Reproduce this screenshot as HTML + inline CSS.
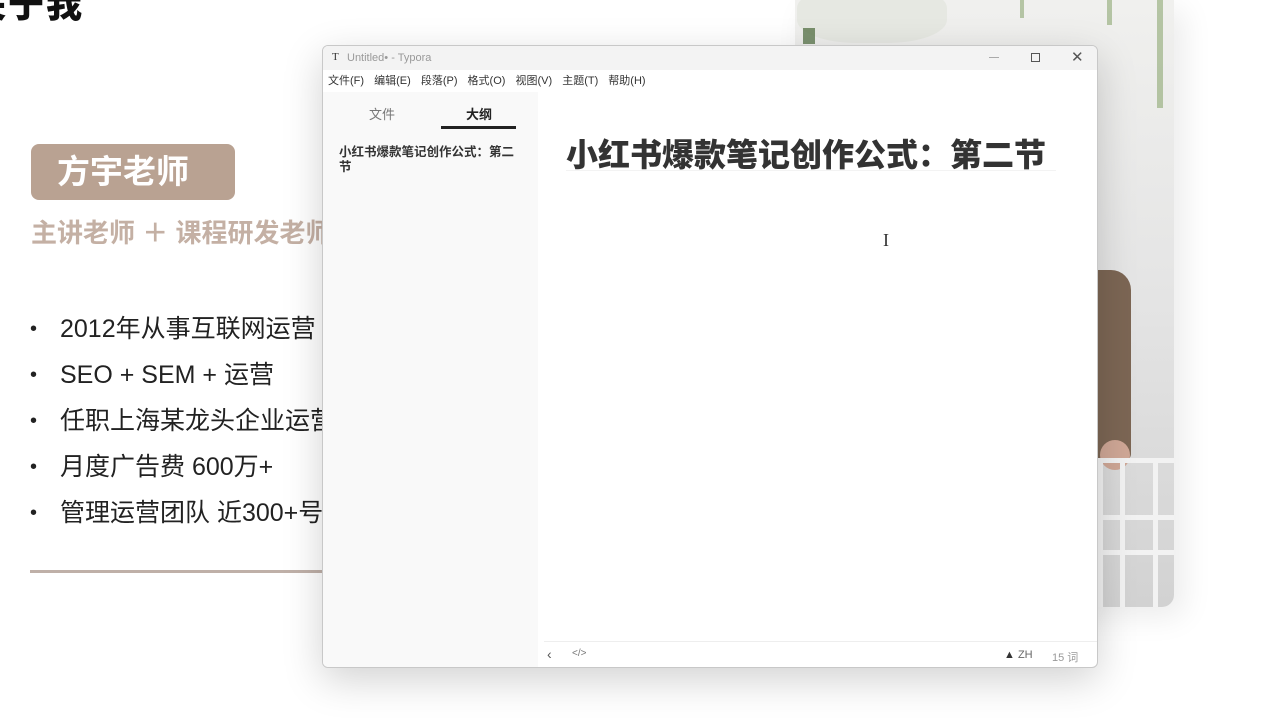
<!DOCTYPE html>
<html><head><meta charset="utf-8"><style>
*{margin:0;padding:0;box-sizing:border-box}
body{width:1280px;height:718px;overflow:hidden;background:#fff;position:relative;font-family:"Liberation Sans","Noto Sans CJK SC",sans-serif}
.abs{position:absolute}
.b div{position:relative;padding-left:30px}
.b div:before{content:"•";position:absolute;left:0;font-size:20px}
</style></head><body>
<div class="abs" style="left:-30px;top:-24px;font-size:36px;font-weight:900;color:#111;letter-spacing:2px">关于我</div>
<div class="abs" style="left:31px;top:144px;width:204px;height:56px;background:#b9a292;border-radius:8px;color:#fff;font-size:33px;font-weight:700;line-height:56px;padding-left:26px">方宇老师</div>
<div class="abs" style="left:31px;top:213px;font-size:26px;font-weight:700;color:#c4b0a4;white-space:nowrap">主讲老师 ＋ 课程研发老师</div>
<div class="abs b" style="left:30px;top:306px;font-size:25px;color:#222;line-height:46px;white-space:nowrap">
<div>2012年从事互联网运营</div>
<div>SEO + SEM + 运营</div>
<div>任职上海某龙头企业运营</div>
<div>月度广告费 600万+</div>
<div>管理运营团队 近300+号</div>
</div>
<div class="abs" style="left:30px;top:570px;width:300px;height:3px;background:#bfb0a8"></div>

<div class="abs" style="left:795px;top:0;width:379px;height:607px;border-radius:0 0 12px 0;background:linear-gradient(#f0f0ee,#e4e4e4 50%,#d2d2d2);box-shadow:10px 10px 30px rgba(0,0,0,0.08);overflow:hidden">
<div class="abs" style="left:2px;top:-15px;width:150px;height:58px;border-radius:40%;background:#e6e8e2"></div>
<div class="abs" style="left:8px;top:28px;width:12px;height:16px;background:#4a6a3a;opacity:.7"></div>
<div class="abs" style="left:362px;top:0;width:6px;height:108px;background:#7a9a5a;opacity:.5"></div>
<div class="abs" style="left:312px;top:0;width:5px;height:25px;background:#7a9a5a;opacity:.5"></div>
<div class="abs" style="left:225px;top:0;width:4px;height:18px;background:#7a9a5a;opacity:.5"></div>
<div class="abs" style="left:290px;top:270px;width:46px;height:190px;border-radius:0 20px 6px 0;background:#7c6654"></div>
<div class="abs" style="left:305px;top:440px;width:30px;height:30px;border-radius:50%;background:#cfa796"></div>
<div class="abs" style="left:303px;top:458px;width:76px;height:150px;border-left:5px solid #f2f2f2;background:linear-gradient(90deg,transparent 17px,#f2f2f2 17px,#f2f2f2 22px,transparent 22px,transparent 50px,#f2f2f2 50px,#f2f2f2 55px,transparent 55px)"></div>
<div class="abs" style="left:303px;top:458px;width:76px;height:5px;background:#f2f2f2"></div>
<div class="abs" style="left:303px;top:515px;width:76px;height:5px;background:#f2f2f2"></div>
<div class="abs" style="left:303px;top:550px;width:76px;height:5px;background:#f2f2f2"></div>
</div>

<div class="abs" style="left:322px;top:45px;width:776px;height:623px;background:#fff;border:1px solid #c8c8c8;border-radius:6px;box-shadow:0 12px 40px rgba(0,0,0,0.18);overflow:hidden">
<div class="abs" style="left:0;top:0;width:776px;height:24px;background:#f3f3f3;font-size:11px;color:#999;line-height:24px">
<span class="abs" style="left:9px;top:5px;font-family:'Liberation Serif';color:#333;line-height:13px;font-size:11px">T</span>
<span class="abs" style="left:24px">Untitled• - Typora</span>
<span class="abs" style="left:666px;top:11px;width:10px;height:1px;background:#aaa"></span>
<span class="abs" style="left:708px;top:7px;width:9px;height:9px;border:1px solid #555"></span>
<span class="abs" style="left:748px;top:0;color:#555;font-size:15px">✕</span>
</div>
<div class="abs" style="left:0;top:24px;width:776px;height:22px;background:#fff;font-size:11px;color:#333;line-height:22px;padding-left:5px;white-space:nowrap;word-spacing:7px">
文件(F) 编辑(E) 段落(P) 格式(O) 视图(V) 主题(T) 帮助(H)</div>
<div class="abs" style="left:0;top:46px;width:215px;height:577px;background:#f9f9f9">
<div class="abs" style="left:46px;top:12px;font-size:13px;color:#777">文件</div>
<div class="abs" style="left:143px;top:12px;font-size:13px;color:#222;font-weight:700">大纲</div>
<div class="abs" style="left:118px;top:34px;width:75px;height:3px;background:#222"></div>
<div class="abs" style="left:16px;top:53px;width:182px;font-size:12.5px;color:#333;font-weight:700;line-height:15px">小红书爆款笔记创作公式：第二节</div>
</div>
<div class="abs" style="left:243px;top:84px;font-size:32px;font-weight:900;color:#333;white-space:nowrap">小红书爆款笔记创作公式：第二节</div>
<div class="abs" style="left:243px;top:124px;width:490px;height:1px;background:#f3f3f3"></div>
<div class="abs" style="left:560px;top:184px;font-size:18px;color:#333;font-family:'Liberation Serif'">I</div>
<div class="abs" style="left:221px;top:595px;width:555px;height:1px;background:#eee"></div>
<div class="abs" style="left:224px;top:600px;font-size:14px;color:#555">‹</div>
<div class="abs" style="left:249px;top:602px;font-size:10px;color:#777">&lt;/&gt;</div>
<div class="abs" style="left:681px;top:603px;font-size:11px;color:#666"><b style="color:#333">▲</b> ZH</div>
<div class="abs" style="left:729px;top:603px;font-size:11px;color:#999">15 词</div>
</div>
</body></html>
